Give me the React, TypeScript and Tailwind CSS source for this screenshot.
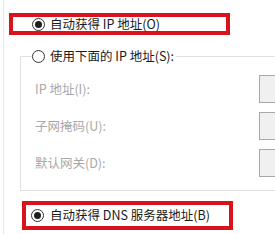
import React from 'react'

const font = { fontFamily: '"Noto Sans CJK SC", "Noto Sans", sans-serif' }

function Radio({ checked }: { checked?: boolean }) {
  return (
    <span className="flex h-[13px] w-[13px] shrink-0 items-center justify-center rounded-full border border-[#333] bg-white">
      {checked && <span className="h-[7px] w-[7px] rounded-full bg-[#1f1f1f]" />}
    </span>
  )
}

export default function App() {
  const fields = ['IP 地址(I):', '子网掩码(U):', '默认网关(D):']

  return (
    <div className="h-[234px] w-[275px] overflow-hidden bg-white pl-[3px]" style={font}>
      <div className="h-full border-l border-[#e6e6e6] pt-[13px]">
        {/* 自动获得 IP */}
        <div className="ml-[5px] flex h-[22px] w-[221px] items-center gap-[5px] border-4 border-[#d7141e] pl-[19px] text-[12.5px] text-[#1a1a1a]">
          <Radio checked />
          <span>自动获得 IP 地址(O)</span>
        </div>

        {/* 手动 IP */}
        <fieldset className="ml-[16px] mt-[12px] w-[320px] border border-[#e0e0e0] pb-[13px]">
          <legend className="ml-[11px] flex h-[18px] items-center gap-[5px] bg-white pr-[2px] text-[12.5px] text-[#1a1a1a]">
            <Radio />
            <span>使用下面的 IP 地址(S):</span>
          </legend>
          <div className="mt-[10px] flex flex-col gap-[9px]">
            {fields.map((f) => (
              <div key={f} className="flex h-[28px] items-center">
                <span className="w-[238px] pl-[14px] text-[12.5px] text-[#a8a8a8]">{f}</span>
                <span className="h-[28px] w-[70px] border border-[#a8a8a8] bg-[#f0f0f0]" />
              </div>
            ))}
          </div>
        </fieldset>

        {/* 自动获得 DNS */}
        <div className="ml-[18px] mt-[10px] flex h-[29px] w-[211px] items-center gap-[6px] border-4 border-[#d7141e] pl-[5px] text-[12.5px] text-[#1a1a1a]">
          <Radio checked />
          <span>自动获得 DNS 服务器地址(B)</span>
        </div>
      </div>
    </div>
  )
}
